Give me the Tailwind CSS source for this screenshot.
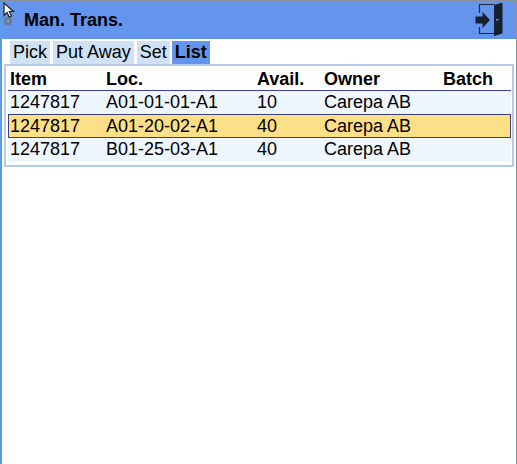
<!DOCTYPE html>
<html lang="en">
  <head>
    <meta charset="UTF-8" />
    <title>Man. Trans.</title>
    <script src="https://cdn.jsdelivr.net/npm/@tailwindcss/browser@4"></script>
  </head>
  <body class="bg-white font-['Liberation_Sans',Arial,sans-serif] text-black overflow-hidden">
    <div class="relative h-[464px] w-[517px] border-l-2 border-r border-t border-l-[#5b9be8] border-r-[#8a9099] border-t-[#8a9099]">
      <!-- Header -->
      <div class="flex h-[38px] items-center justify-between bg-[#6495ed] pl-[22px] pr-[12px]">
        <span class="text-[18px] font-bold">Man. Trans.</span>
        <svg width="30" height="34" viewBox="0 0 30 34">
          <path d="M5.5 10V1.5h15M5.5 24v6.5h15" fill="none" stroke="#1f2a3a" stroke-width="1.2" />
          <path d="M20 2l8.5-2.5v31l-8.5 2.5z" fill="#16202e" />
          <path d="M1.5 13.5h7V9l7.5 8-7.5 8v-4.5h-7z" fill="#16202e" />
          <rect x="22" y="16" width="2.5" height="1.5" fill="#6495ed" />
        </svg>
      </div>

      <!-- Tabs -->
      <div class="flex h-[25px] items-stretch gap-[3px] pl-[8px] pt-[2px] text-[18px] leading-[23px]">
        <div class="bg-[#cfe2f5] px-[3px]">Pick</div>
        <div class="bg-[#cfe2f5] px-[3px]">Put Away</div>
        <div class="bg-[#cfe2f5] px-[3px]">Set</div>
        <div class="-ml-px bg-[#6495ed] px-[3px] font-bold">List</div>
      </div>

      <!-- List -->
      <div class="mx-[2px] h-[103px] border-2 border-[#b4cdea] bg-white pl-[2px] pr-[1px] text-[18px] leading-[23px]">
        <div class="grid h-[25px] grid-cols-[96px_151px_67px_119px_1fr] border-b border-b-[#3f3fa8] pl-[2px] font-bold leading-[26px]">
          <div>Item</div>
          <div>Loc.</div>
          <div>Avail.</div>
          <div>Owner</div>
          <div>Batch</div>
        </div>
        <div class="grid h-[23px] grid-cols-[96px_151px_67px_120px_1fr] bg-[#eef6ff] pl-[2px]">
          <div>1247817</div>
          <div>A01-01-01-A1</div>
          <div>10</div>
          <div>Carepa AB</div>
          <div></div>
        </div>
        <div class="grid h-[24px] grid-cols-[96px_151px_67px_120px_1fr] border border-[#3d3d7a] bg-[#fddf88] pl-[1px] leading-[22px]">
          <div>1247817</div>
          <div>A01-20-02-A1</div>
          <div>40</div>
          <div>Carepa AB</div>
          <div></div>
        </div>
        <div class="grid h-[24px] grid-cols-[96px_151px_67px_120px_1fr] bg-[#eef6ff] pl-[2px]">
          <div>1247817</div>
          <div>B01-25-03-A1</div>
          <div>40</div>
          <div>Carepa AB</div>
          <div></div>
        </div>
      </div>

      <!-- Cursor over the corner -->
      <svg class="absolute left-0 top-0" width="14" height="26" viewBox="0 0 14 26">
        <circle cx="6" cy="20" r="3" fill="none" stroke="#777" stroke-width="2" />
        <path d="M2 2v12.5l3-3 2.2 4.5 2.3-1-2.2-4.5h4.2z" fill="#fff" stroke="#222" stroke-width="1.2" />
      </svg>
    </div>
  </body>
</html>
